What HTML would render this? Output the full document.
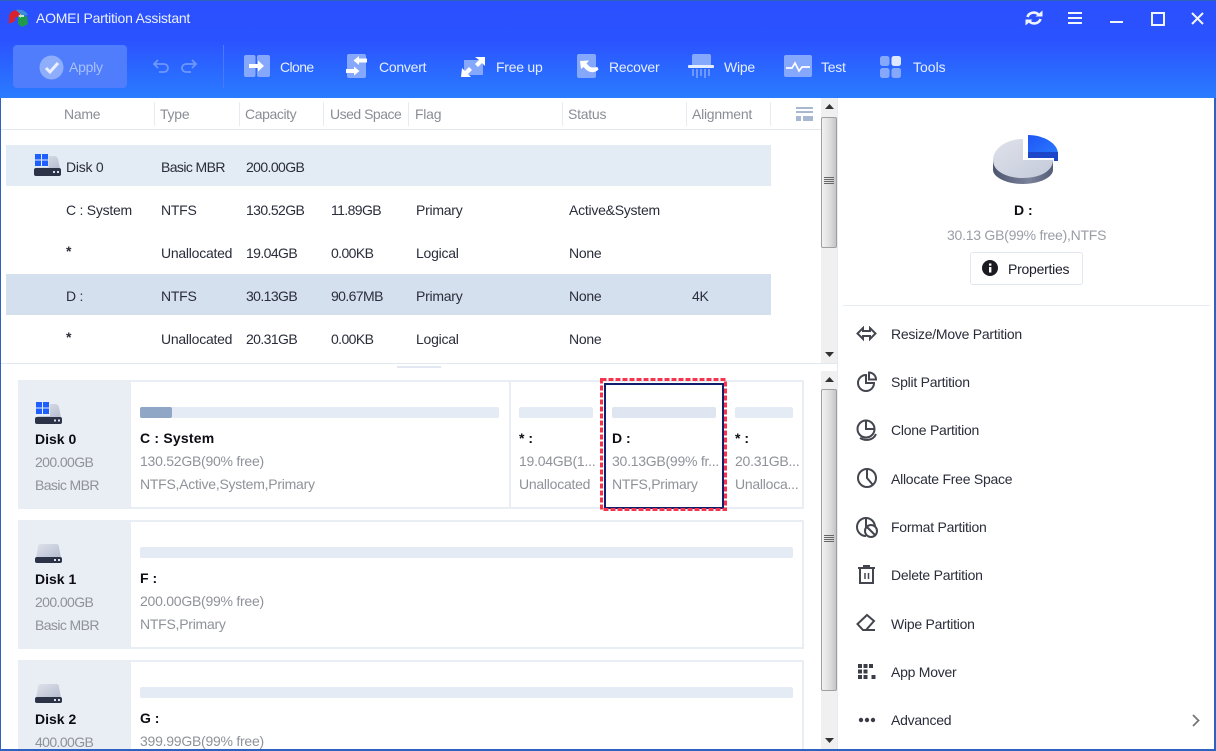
<!DOCTYPE html>
<html><head><meta charset="utf-8"><title>AOMEI Partition Assistant</title>
<style>
html,body{margin:0;padding:0;background:#fff}
#w{position:relative;width:1216px;height:751px;overflow:hidden;background:#fff;font-family:"Liberation Sans",sans-serif;font-size:14px;color:#2b2b3a}
#w div,#w span.t,#w svg{position:absolute}
.t{position:absolute;white-space:nowrap;line-height:16px;letter-spacing:-.25px}
.h{color:#8a8d96}
.g{color:#8f929a}
.b{font-weight:bold;color:#0c0c14;letter-spacing:0}
.w{color:#e6eeff}
.m{color:#2a2d3a}
.n{letter-spacing:-.6px}
</style></head><body><div id="w">

<!-- header -->
<div style="left:0;top:0;width:1216px;height:98px;background:linear-gradient(#2b50ff 0,#2b52ff 40px,#2a7cff 98px)"></div>
<div style="left:0;top:0;width:1216px;height:1px;background:#2e62b8"></div>
<svg style="left:8px;top:8px" width="22" height="20" viewBox="0 0 22 20"><path d="M1 9C1 4 6 2 10 2l3 5-6 3v3l-6 3z" fill="#d8232f"/><path d="M8 2c4-1 9 0 12 5l-6 1z" fill="#3a8fd8"/><path d="M10 9l9-1 1 8-6 3-4-3z" fill="#1f9a4a"/><path d="M10 8l3-2v1h3v2h-3v1z" fill="#bfe8c8"/></svg>
<span class="t w" style="left:36px;top:10px;font-size:14px;color:#eaf0ff">AOMEI Partition Assistant</span>

<div style="left:13px;top:45px;width:114px;height:43px;border-radius:4px;background:#4f7dfb"></div>
<svg style="left:39px;top:55px" width="25" height="25" viewBox="0 0 25 25"><circle cx="12.500" cy="12.500" r="12" fill="#8eaefc"/><path d="M7 13l4 4 8-9" fill="none" stroke="#eaf0ff" stroke-width="3"/></svg>
<span class="t" style="left:69px;top:59px;color:#a9c1fd">Apply</span>
<svg style="left:152px;top:58px" width="46" height="16" viewBox="0 0 46 16" fill="none" stroke="#6f97fb" stroke-width="1.800"><path d="M2 6h10a4 4 0 0 1 0 8H7M6 2L2 6l4 4"/><path d="M44 6H34a4 4 0 0 0 0 8h5M40 2l4 4-4 4"/></svg>
<div style="left:223px;top:45px;width:1px;height:43px;background:#4a78fb"></div>

<svg style="left:244px;top:55px" width="26" height="23" viewBox="0 0 26 23"><rect width="11.500" height="22" rx="2" fill="#86a8fc"/><rect x="13" width="13" height="22" rx="2" fill="#86a8fc"/><path d="M5 9h9V5.500l6 5.500-6 5.500V13H5z" fill="#fff"/></svg>
<span class="t w n" style="left:280px;top:59px">Clone</span>

<svg style="left:346px;top:54px" width="22" height="25" viewBox="0 0 22 25"><rect x="1" width="19" height="24" rx="2" fill="#86a8fc"/><path d="M21 4.500H13V2L7.500 6.500 13 11V8.500h8z" fill="#fff"/><path d="M0 15h8v-2.500l5.500 4.500L8 21.500V19H0z" fill="#fff"/></svg>
<span class="t w" style="left:379px;top:59px">Convert</span>

<svg style="left:461px;top:56px" width="25" height="22" viewBox="0 0 25 22"><path d="M3 4h19v15H3z" fill="#86a8fc"/><path d="M14 1h10v9l-3-3-4 4-3-3 4-4zM1 12l3 3 4-4 3 3-4 4 3 3H0z" fill="#fff"/></svg>
<span class="t w" style="left:496px;top:59px">Free up</span>

<svg style="left:576px;top:54px" width="24" height="25" viewBox="0 0 24 25"><rect x="1" width="19" height="24" rx="2" fill="#86a8fc"/><path d="M4 7l9-.5-2.500 3 3 3c2 1.500 5 1 8 .5l1 2.500c-4 4-9 3-12 .5l-3-3L5 15z" fill="#fff"/></svg>
<span class="t w" style="left:609px;top:59px">Recover</span>

<svg style="left:688px;top:54px" width="26" height="25" viewBox="0 0 26 25"><path d="M4 2a2 2 0 0 1 2-2h15a2 2 0 0 1 2 2v10H4z" fill="#86a8fc"/><rect y="11" width="26" height="3" rx="1" fill="#e4ecff"/><path d="M5 15v7M9 15v9M13 15v7M17 15v9M21 15v7" stroke="#86a8fc" stroke-width="1.500"/></svg>
<span class="t w" style="left:724px;top:59px">Wipe</span>

<svg style="left:784px;top:55px" width="28" height="23" viewBox="0 0 28 23"><rect width="28" height="22" rx="2" fill="#86a8fc"/><path d="M2 13h6l3-5 4 8 3-4h8" fill="none" stroke="#fff" stroke-width="1.700"/></svg>
<span class="t w" style="left:821px;top:59px">Test</span>

<svg style="left:880px;top:56px" width="21" height="22" viewBox="0 0 21 22"><rect width="9.500" height="10" rx="2.500" fill="#86a8fc"/><rect x="11.500" width="9.500" height="10" rx="2.500" fill="#dde7ff"/><rect y="12" width="9.500" height="10" rx="2.500" fill="#86a8fc"/><rect x="11.500" y="12" width="9.500" height="10" rx="2.500" fill="#86a8fc"/></svg>
<span class="t w" style="left:913px;top:59px;letter-spacing:0">Tools</span>

<!-- window controls -->
<svg style="left:1025px;top:9px" width="18" height="18" viewBox="0 0 18 18" fill="none" stroke="#f0f4ff" stroke-width="2.600"><path d="M2.500 8a6.500 6 0 0 1 11-2.500"/><path d="M15.500 10a6.500 6 0 0 1-11 2.500"/><path d="M10.500 7.500h7V1.500z" fill="#f0f4ff" stroke="none"/><path d="M7.500 10.500h-7v6z" fill="#f0f4ff" stroke="none"/></svg>
<svg style="left:1068px;top:12px" width="14" height="13" viewBox="0 0 14 13" fill="#f0f4ff"><rect width="14" height="2"/><rect y="5" width="14" height="2"/><rect y="10" width="14" height="2"/></svg>
<div style="left:1110px;top:21px;width:13px;height:2px;background:#f0f4ff"></div>
<div style="left:1151px;top:12px;width:10px;height:9.500px;border:2px solid #f0f4ff"></div>
<svg style="left:1191px;top:12px" width="13" height="13" viewBox="0 0 13 13" stroke="#f0f4ff" stroke-width="2"><path d="M1 1l11 11M12 1L1 12"/></svg>

<!-- table header -->
<div style="left:0;top:129px;width:821px;height:1px;background:#e2e8f0"></div>
<span class="t h" style="left:64px;top:106px">Name</span>
<span class="t h" style="left:160px;top:106px">Type</span>
<span class="t h" style="left:245px;top:106px;letter-spacing:-.4px">Capacity</span>
<span class="t h" style="left:330px;top:106px;letter-spacing:-.5px">Used Space</span>
<span class="t h" style="left:415px;top:106px">Flag</span>
<span class="t h" style="left:568px;top:106px">Status</span>
<span class="t h" style="left:692px;top:106px">Alignment</span>
<div style="left:154px;top:102px;width:1px;height:24px;background:#e6ebf2"></div>
<div style="left:239px;top:102px;width:1px;height:24px;background:#e6ebf2"></div>
<div style="left:323px;top:102px;width:1px;height:24px;background:#e6ebf2"></div>
<div style="left:408px;top:102px;width:1px;height:24px;background:#e6ebf2"></div>
<div style="left:562px;top:102px;width:1px;height:24px;background:#e6ebf2"></div>
<div style="left:686px;top:102px;width:1px;height:24px;background:#e6ebf2"></div>
<div style="left:770px;top:102px;width:1px;height:24px;background:#e6ebf2"></div>
<svg style="left:796px;top:107px" width="17" height="15" viewBox="0 0 17 15" fill="#a9b8d2"><rect width="17" height="2"/><rect y="4" width="17" height="2"/><rect y="9" width="5" height="5"/><rect x="7" y="9" width="10" height="5"/></svg>

<!-- rows -->
<div style="left:6px;top:145px;width:765px;height:41px;background:#e3ebf5"></div>
<div style="left:6px;top:274px;width:765px;height:41px;background:#d5e0ee"></div>
<svg style="left:34px;top:153px" width="27" height="24" viewBox="0 0 27 24"><defs><linearGradient id="q" x1="0" y1="0" x2="1" y2="1"><stop offset="0" stop-color="#dfe2ea"/><stop offset="1" stop-color="#b4bccf"/></linearGradient></defs><path d="M6 3h14c2 0 3 1 4 3l2 10H2z" fill="url(#q)"/><rect y="15" width="27" height="8" rx="2" fill="#2c3347"/><rect x="19" y="18" width="2" height="2" fill="#dde"/><rect x="23" y="18" width="2" height="2" fill="#dde"/><rect x="0" y="0" width="14.500" height="14.500" fill="#e3ebf5"/><path d="M1 1h6v5.500H1zM8 1h6v5.500H8zM1 7.500h6V13H1zM8 7.500h6V13H8z" fill="#1f5fff"/></svg>
<span class="t m" style="left:66px;top:159px">Disk 0</span><span class="t m n" style="left:161px;top:159px">Basic MBR</span><span class="t m n" style="left:246px;top:159px">200.00GB</span>
<span class="t m" style="left:66px;top:202px">C : System</span><span class="t m" style="left:161px;top:202px">NTFS</span><span class="t m n" style="left:246px;top:202px">130.52GB</span><span class="t m n" style="left:331px;top:202px">11.89GB</span><span class="t m" style="left:416px;top:202px">Primary</span><span class="t m" style="left:569px;top:202px">Active&amp;System</span>
<span class="t m b" style="left:66px;top:243px">*</span><span class="t m" style="left:161px;top:245px">Unallocated</span><span class="t m n" style="left:246px;top:245px">19.04GB</span><span class="t m n" style="left:331px;top:245px">0.00KB</span><span class="t m" style="left:416px;top:245px">Logical</span><span class="t m" style="left:569px;top:245px">None</span>
<span class="t m" style="left:66px;top:288px">D :</span><span class="t m" style="left:161px;top:288px">NTFS</span><span class="t m n" style="left:246px;top:288px">30.13GB</span><span class="t m n" style="left:331px;top:288px">90.67MB</span><span class="t m" style="left:416px;top:288px">Primary</span><span class="t m" style="left:569px;top:288px">None</span><span class="t m" style="left:692px;top:288px">4K</span>
<span class="t m b" style="left:66px;top:329px">*</span><span class="t m" style="left:161px;top:331px">Unallocated</span><span class="t m n" style="left:246px;top:331px">20.31GB</span><span class="t m n" style="left:331px;top:331px">0.00KB</span><span class="t m" style="left:416px;top:331px">Logical</span><span class="t m" style="left:569px;top:331px">None</span>

<div style="left:0;top:363px;width:838px;height:1px;background:#e2e8f0"></div>
<div style="left:397px;top:366px;width:44px;height:2px;background:#e2e8f2"></div>

<!-- scrollbars -->
<div style="left:821px;top:98px;width:16px;height:265px;background:#f0f0f0"></div>
<div style="left:821px;top:371px;width:16px;height:378px;background:#f0f0f0"></div>
<div style="left:837px;top:98px;width:1px;height:652px;background:#e4ebf5"></div>
<svg style="left:825px;top:104px" width="9" height="5"><path d="M0 5L4.500 0 9 5z" fill="#333"/></svg>
<svg style="left:825px;top:352px" width="9" height="5"><path d="M0 0L4.500 5 9 0z" fill="#333"/></svg>
<svg style="left:825px;top:377px" width="9" height="5"><path d="M0 5L4.500 0 9 5z" fill="#333"/></svg>
<svg style="left:825px;top:738px" width="9" height="5"><path d="M0 0L4.500 5 9 0z" fill="#333"/></svg>
<div style="left:821px;top:117px;width:14px;height:129px;border:1px solid #a0a0a0;border-radius:2px;background:linear-gradient(90deg,#f2f2f2,#dcdcdc 60%,#c4c4c4)"></div>
<div style="left:821px;top:389px;width:14px;height:300px;border:1px solid #a0a0a0;border-radius:2px;background:linear-gradient(90deg,#f2f2f2,#dcdcdc 60%,#c4c4c4)"></div>
<svg style="left:824px;top:177px" width="10" height="9" fill="#666"><rect width="10" height="1"/><rect y="2" width="10" height="1"/><rect y="4" width="10" height="1"/><rect y="6" width="10" height="1"/></svg>
<svg style="left:824px;top:535px" width="10" height="9" fill="#666"><rect width="10" height="1"/><rect y="2" width="10" height="1"/><rect y="4" width="10" height="1"/><rect y="6" width="10" height="1"/></svg>

<!-- disk cards -->
<div style="left:18px;top:380px;width:786px;height:129px;background:#e9edf4"></div>
<div style="left:131px;top:382px;width:671px;height:125px;background:#fff"></div>
<div style="left:509px;top:382px;width:2px;height:125px;background:#e9edf4"></div>
<div style="left:18px;top:520px;width:786px;height:129px;background:#e9edf4"></div>
<div style="left:131px;top:522px;width:671px;height:125px;background:#fff"></div>
<div style="left:18px;top:660px;width:786px;height:90px;background:#e9edf4"></div>
<div style="left:131px;top:662px;width:671px;height:88px;background:#fff"></div>

<svg style="left:35px;top:401px" width="27" height="24" viewBox="0 0 27 24"><path d="M6 3h14c2 0 3 1 4 3l2 11H2z" fill="url(#q)"/><rect y="16" width="27" height="7" rx="2" fill="#2c3347"/><rect x="19" y="18.500" width="2" height="2" fill="#dde"/><rect x="23" y="18.500" width="2" height="2" fill="#dde"/><rect x="0" y="0" width="15" height="15" fill="#e9edf4"/><path d="M1 1h6v5.500H1zM8 1h6v5.500H8zM1 7.500h6V13H1zM8 7.500h6V13H8z" fill="#1f5fff"/></svg>
<span class="t b" style="left:35px;top:431px">Disk 0</span><span class="t g n" style="left:35px;top:454px">200.00GB</span><span class="t g n" style="left:35px;top:477px">Basic MBR</span>

<svg style="left:35px;top:544px" width="27" height="20" viewBox="0 0 27 20"><path d="M6 0h15c2 0 3 1 3 3l2 11H1l2-11c0-2 1-3 3-3z" fill="url(#q)"/><rect y="13" width="27" height="6" rx="2" fill="#2c3347"/><rect x="19" y="15" width="2" height="2" fill="#dde"/><rect x="23" y="15" width="2" height="2" fill="#dde"/></svg>
<span class="t b" style="left:35px;top:571px">Disk 1</span><span class="t g n" style="left:35px;top:594px">200.00GB</span><span class="t g n" style="left:35px;top:617px">Basic MBR</span>

<svg style="left:35px;top:684px" width="27" height="20" viewBox="0 0 27 20"><path d="M6 0h15c2 0 3 1 3 3l2 11H1l2-11c0-2 1-3 3-3z" fill="url(#q)"/><rect y="13" width="27" height="6" rx="2" fill="#2c3347"/><rect x="19" y="15" width="2" height="2" fill="#dde"/><rect x="23" y="15" width="2" height="2" fill="#dde"/></svg>
<span class="t b" style="left:35px;top:711px">Disk 2</span><span class="t g n" style="left:35px;top:734px">400.00GB</span>

<!-- bars -->
<div style="left:140px;top:407px;width:359px;height:11px;background:#e5ebf4;border-radius:2px"></div>
<div style="left:140px;top:407px;width:32px;height:11px;background:#8fa6c6;border-radius:2px"></div>
<div style="left:519px;top:407px;width:74px;height:11px;background:#e5ebf4;border-radius:2px"></div>
<div style="left:612px;top:407px;width:104px;height:11px;background:#dfe6f1;border-radius:2px"></div>
<div style="left:735px;top:407px;width:58px;height:11px;background:#e5ebf4;border-radius:2px"></div>
<div style="left:140px;top:547px;width:653px;height:11px;background:#e5ebf4;border-radius:2px"></div>
<div style="left:140px;top:687px;width:653px;height:11px;background:#e5ebf4;border-radius:2px"></div>

<span class="t b" style="left:140px;top:430px;letter-spacing:.2px">C : System</span><span class="t g" style="left:140px;top:453px">130.52GB(90% free)</span><span class="t g" style="left:140px;top:476px">NTFS,Active,System,Primary</span>
<span class="t b" style="left:519px;top:430px">* :</span><span class="t g" style="left:519px;top:453px">19.04GB(1...</span><span class="t g" style="left:519px;top:476px">Unallocated</span>
<span class="t b" style="left:612px;top:430px">D :</span><span class="t g" style="left:612px;top:453px">30.13GB(99% fr...</span><span class="t g" style="left:612px;top:476px">NTFS,Primary</span>
<span class="t b" style="left:735px;top:430px">* :</span><span class="t g" style="left:735px;top:453px">20.31GB...</span><span class="t g" style="left:735px;top:476px">Unalloca...</span>
<span class="t b" style="left:140px;top:570px">F :</span><span class="t g" style="left:140px;top:593px">200.00GB(99% free)</span><span class="t g" style="left:140px;top:616px">NTFS,Primary</span>
<span class="t b" style="left:140px;top:710px">G :</span><span class="t g" style="left:140px;top:733px">399.99GB(99% free)</span>

<!-- selection -->
<div style="left:604px;top:383px;width:116px;height:122px;border:2px solid #0f1f6e;box-sizing:content-box"></div>
<svg style="left:600px;top:378px" width="127" height="133"><rect x="1.500" y="1.500" width="124" height="130" fill="none" stroke="#f5344e" stroke-width="3" stroke-dasharray="5 2"/></svg>

<!-- right panel -->
<svg style="left:990px;top:132px" width="72" height="56" viewBox="0 0 72 56">
<defs><linearGradient id="a" x1="0" y1="0" x2="1" y2="1"><stop offset="0" stop-color="#dfe2ea"/><stop offset="1" stop-color="#c4cadb"/></linearGradient><linearGradient id="c" x1="0" y1="0" x2="1" y2="0"><stop offset="0" stop-color="#4d566f"/><stop offset=".6" stop-color="#7b829b"/><stop offset="1" stop-color="#555e77"/></linearGradient><linearGradient id="d" x1="0" y1="0" x2="1" y2="1"><stop offset="0" stop-color="#1f55f5"/><stop offset="1" stop-color="#2a7cff"/></linearGradient></defs>
<path d="M3 28v10c0 7 13 14 30 14s30-7 30-14V28z" fill="url(#c)"/>
<path d="M33 7C16 7 3 17 3 28s13 18 30 18 30-7 30-18H33z" fill="url(#a)"/>
<path d="M38 3c15 0 30 8 30 19v4H38z" fill="url(#d)"/>
<path d="M38 20h30v9h-4v-3H38z" fill="#1d46c8"/>
</svg>
<span class="t b" style="left:1014px;top:202px">D :</span>
<span class="t g" style="left:947px;top:227px;color:#9a9da6">30.13 GB(99% free),NTFS</span>
<div style="left:970px;top:252px;width:111px;height:31px;border:1px solid #e2e7f0;border-radius:3px"></div>
<svg style="left:982px;top:260px" width="16" height="16" viewBox="0 0 16 16"><circle cx="8" cy="8" r="8" fill="#1a1a20"/><rect x="7" y="7" width="2.400" height="5.500" fill="#fff"/><rect x="7" y="3.500" width="2.400" height="2.200" fill="#fff"/></svg>
<span class="t" style="left:1008px;top:261px;color:#1d1d2b">Properties</span>
<div style="left:843px;top:305px;width:367px;height:1px;background:#e6ebf4"></div>

<svg style="left:856px;top:326px" width="21" height="16" viewBox="0 0 21 16" fill="none" stroke="#44464f" stroke-width="2"><path d="M7 2L1.500 7.500 7 13V10h7v3l5.500-5.500L14 2v3H7z"/></svg>
<span class="t m" style="left:891px;top:326px">Resize/Move Partition</span>
<svg style="left:856px;top:371px" width="22" height="22" viewBox="0 0 22 22" fill="none" stroke="#44464f" stroke-width="2"><path d="M10 4a8 8 0 1 0 8 8h-8z"/><path d="M13 1.500a7 7 0 0 1 7 7h-7z"/></svg>
<span class="t m" style="left:891px;top:374px">Split Partition</span>
<svg style="left:856px;top:419px" width="22" height="23" viewBox="0 0 22 23" fill="none" stroke="#44464f" stroke-width="2"><circle cx="10" cy="10" r="8.500"/><path d="M10 2v8h8.500"/><path d="M4 19c5 3 13 3 16-4"/></svg>
<span class="t m" style="left:891px;top:422px">Clone Partition</span>
<svg style="left:856px;top:467px" width="22" height="22" viewBox="0 0 22 22" fill="none" stroke="#44464f" stroke-width="2"><circle cx="11" cy="11" r="9"/><path d="M11 2v9l6 7"/></svg>
<span class="t m" style="left:891px;top:471px">Allocate Free Space</span>
<svg style="left:856px;top:516px" width="23" height="22" viewBox="0 0 23 22" fill="none" stroke="#44464f" stroke-width="2"><path d="M10 2a9 9 0 1 0 0 18"/><path d="M10 2a9 9 0 0 1 9 9h-9z"/><circle cx="15" cy="15" r="6" fill="#fff"/><path d="M11 11l8 8"/></svg>
<span class="t m" style="left:891px;top:519px">Format Partition</span>
<svg style="left:857px;top:565px" width="20" height="20" viewBox="0 0 20 20" fill="none" stroke="#44464f" stroke-width="2"><path d="M1 3h17M6 1h7M3 4v14h13V4"/><path d="M8 8v6M11.500 8v6" stroke-width="1.500"/></svg>
<span class="t m" style="left:891px;top:567px">Delete Partition</span>
<svg style="left:856px;top:613px" width="22" height="20" viewBox="0 0 22 20" fill="none" stroke="#44464f" stroke-width="2"><path d="M1.500 11L11 2l7 6-8 9H7z"/><path d="M7 17h12"/></svg>
<span class="t m" style="left:891px;top:616px">Wipe Partition</span>
<svg style="left:858px;top:664px" width="18" height="16" viewBox="0 0 18 16" fill="#3a3c46"><rect width="4" height="4"/><rect x="5.500" width="4" height="4"/><rect x="11" width="4" height="4"/><rect y="5.500" width="4" height="4"/><rect x="5.500" y="5.500" width="4" height="4"/><rect y="11" width="4" height="4"/><rect x="5.500" y="11" width="4" height="4"/><rect x="13.500" y="11" width="4" height="4"/></svg>
<span class="t m" style="left:891px;top:664px">App Mover</span>
<svg style="left:858px;top:717px" width="18" height="6" viewBox="0 0 18 6" fill="#3a3c46"><circle cx="3" cy="3" r="2.200"/><circle cx="9" cy="3" r="2.200"/><circle cx="15" cy="3" r="2.200"/></svg>
<span class="t m" style="left:891px;top:712px">Advanced</span>
<svg style="left:1191px;top:714px" width="9" height="13" viewBox="0 0 9 13" fill="none" stroke="#777" stroke-width="1.800"><path d="M2 1l5.500 5.500L2 12"/></svg>

<!-- window border -->
<div style="left:0;top:98px;width:1px;height:653px;background:#2e62c0"></div>
<div style="left:1214px;top:98px;width:2px;height:653px;background:#2e62c0"></div>
<div style="left:0;top:749px;width:1216px;height:2px;background:#2e62c0"></div>
</div></body></html>
